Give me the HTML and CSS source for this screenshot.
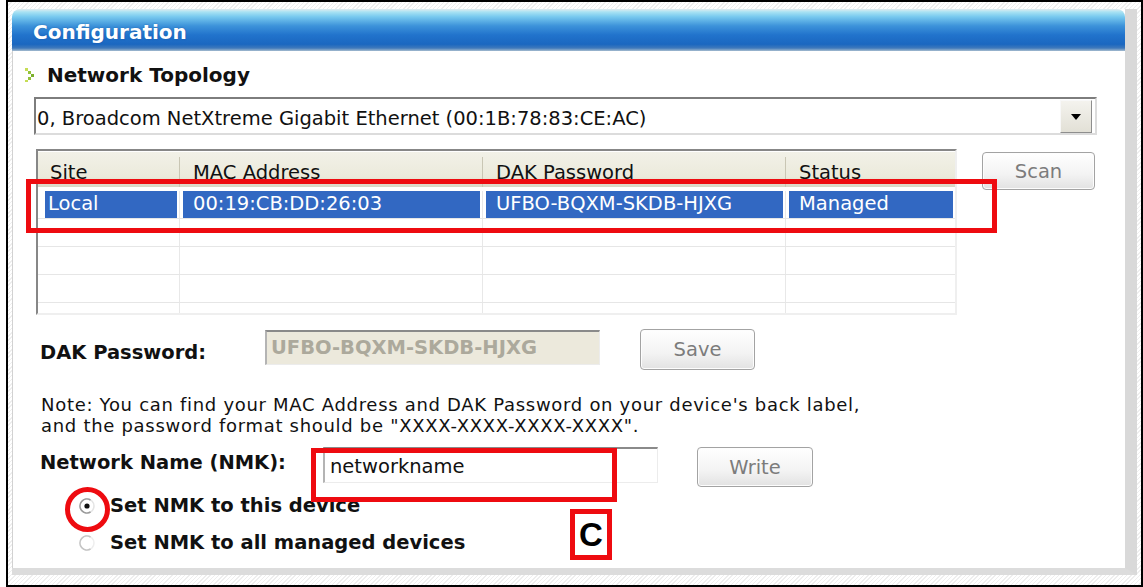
FILE: index.html
```html
<!DOCTYPE html>
<html lang="en">
    <head>
        <meta charset="UTF-8" />
        <title>Configuration</title>
        <link rel="stylesheet" href="styles.css">
    </head>
    <body>
        <div class="shot">
            <div class="panel">
                <div class="panel-head">Configuration</div>
                <div class="panel-body">
                    <div class="section-title">
                        <svg class="bullet" width="10" height="14" viewBox="0 0 10 14">
                            <rect x="0" y="0" width="3" height="3" fill="#c6dd55" />
                            <rect x="3" y="3" width="3" height="3" fill="#93c23a" />
                            <rect x="6" y="6" width="3" height="3" fill="#7cb02c" />
                            <rect x="3" y="9" width="3" height="3" fill="#93c23a" />
                            <rect x="0" y="12" width="3" height="2" fill="#c6dd55" />
                        </svg>
                        Network Topology
                    </div>

                    <div class="combo">
                        <span class="combo-text">0, Broadcom NetXtreme Gigabit Ethernet (00:1B:78:83:CE:AC)</span>
                        <span class="combo-btn"><i class="caret"></i></span>
                    </div>

                    <div class="list-row">
                        <div class="list">
                            <div class="list-head">
                                <span class="col c1">Site</span>
                                <span class="col c2">MAC Address</span>
                                <span class="col c3">DAK Password</span>
                                <span class="col c4">Status</span>
                            </div>
                            <div class="list-body">
                                <div class="item selected">
                                    <span class="col c1"><b>Local</b></span>
                                    <span class="col c2"><b>00:19:CB:DD:26:03</b></span>
                                    <span class="col c3"><b>UFBO-BQXM-SKDB-HJXG</b></span>
                                    <span class="col c4"><b>Managed</b></span>
                                </div>
                                <div class="item">
                                    <span class="col c1"></span><span class="col c2"></span><span class="col c3"></span><span class="col c4"></span>
                                </div>
                                <div class="item">
                                    <span class="col c1"></span><span class="col c2"></span><span class="col c3"></span><span class="col c4"></span>
                                </div>
                                <div class="item">
                                    <span class="col c1"></span><span class="col c2"></span><span class="col c3"></span><span class="col c4"></span>
                                </div>
                                <div class="item">
                                    <span class="col c1"></span><span class="col c2"></span><span class="col c3"></span><span class="col c4"></span>
                                </div>
                            </div>
                        </div>
                        <button class="btn scan">Scan</button>
                    </div>

                    <div class="field dak">
                        <label class="field-label">DAK Password:</label>
                        <div class="input disabled">UFBO-BQXM-SKDB-HJXG</div>
                        <button class="btn save">Save</button>
                    </div>

                    <p class="note">Note: You can find your MAC Address and DAK Password on your device's back label,<br>and the password format should be "XXXX-XXXX-XXXX-XXXX".</p>

                    <div class="field nmk">
                        <label class="field-label">Network Name (NMK):</label>
                        <div class="input">networkname</div>
                        <button class="btn write">Write</button>
                    </div>

                    <div class="radio first">
                        <svg width="18" height="18" viewBox="0 0 18 18">
                            <circle cx="9" cy="9" r="7" fill="#fff" stroke="#e4e4e4" stroke-width="1.5" />
                            <path d="M12.5 2.94 A7 7 0 1 0 12.5 15.06" fill="none" stroke="#9a9a9a" stroke-width="1.6" />
                            <circle cx="9" cy="9" r="2.6" fill="#111" />
                        </svg>
                        Set NMK to this device
                    </div>
                    <div class="radio">
                        <svg width="18" height="18" viewBox="0 0 18 18">
                            <circle cx="9" cy="9" r="7" fill="#fff" stroke="#eeeeee" stroke-width="1.5" />
                            <path d="M12.5 2.94 A7 7 0 1 0 12.5 15.06" fill="none" stroke="#c4c4c4" stroke-width="1.6" />
                        </svg>
                        Set NMK to all managed devices
                    </div>
                </div>
            </div>

            <!-- callouts drawn over the screenshot -->
            <div class="mark mark-row"></div>
            <div class="mark mark-input"></div>
            <div class="mark mark-radio"></div>
            <div class="mark mark-label">C</div>
        </div>
    </body>
</html>
```

FILE: styles.css
```css
* {
    margin: 0px;
    padding: 0px;
    box-sizing: border-box;
}
body {
    background: #fff;
    font-family: "DejaVu Sans", "Noto Sans", sans-serif;
    font-size: 19.5px;
    color: #111;
}

/* outer frame */
.shot {
    position: relative;
    width: 1137px;
    height: 587px;
    margin-left: 6px;
    border: 2px solid #000;
    padding: 7px 4px 10px 4px;
    background: repeating-linear-gradient(135deg, #fff 0 2px, #eeeeee 2px 3px);
}

.panel {
    height: 100%;
    display: flex;
    flex-direction: column;
    border-right: 12px solid #d9d9d9;
    border-bottom: 7px solid #dcdcdc;
    background: #fff;
}
.panel-head {
    height: 42px;
    padding: 3px 0 0 21px;
    line-height: 40px;
    font-weight: bold;
    font-size: 20px;
    color: #fff;
    border-radius: 8px 8px 0 0;
    text-shadow: 0 0 2px rgba(10, 70, 150, 0.6);
    background: linear-gradient(to bottom, #e2ecef 0%, #a8e2f3 7%, #79caef 18%, #3d93da 40%, #2173cc 62%, #1b67c0 84%, #3f79bb 93%, #a6bccf 100%);
}
.panel-body {
    flex: 1;
    border-left: 1px solid #d2d2d2;
}

.section-title {
    display: flex;
    align-items: center;
    height: 24px;
    line-height: 24px;
    margin: 12px 0 0 12px;
    font-weight: bold;
    font-size: 20px;
}
.section-title .bullet {
    margin-right: 12px;
}

/* drop down */
.combo {
    display: flex;
    height: 38px;
    margin: 10px 28px 0 21px;
    border: 2px solid #dcdcdc;
    border-top-color: #7d7d7d;
    border-left-color: #7d7d7d;
    background: #fff;
}
.combo-text {
    flex: 1;
    padding: 6px 0 0 1px;
    line-height: 28px;
    white-space: nowrap;
}
.combo-btn {
    width: 32px;
    height: 33px;
    margin: 1px 3px 0 0;
    display: flex;
    align-items: center;
    justify-content: center;
    background: linear-gradient(#f4f3ee, #e2e0d6);
    border: 1px solid #f8f8f8;
    border-right-color: #8e8e8e;
    border-bottom-color: #8e8e8e;
}
.caret {
    width: 0;
    height: 0;
    border-left: 5px solid transparent;
    border-right: 5px solid transparent;
    border-top: 6px solid #000;
}

/* list view */
.list-row {
    display: flex;
    align-items: flex-start;
    margin: 14px 0 0 23px;
}
.list {
    width: 921px;
    height: 166px;
    overflow: hidden;
    border: 2px solid #efefef;
    border-top-color: #878787;
    border-left-color: #878787;
    background: #fff;
}
.list-head {
    display: flex;
    height: 36px;
    padding-top: 5px;
    line-height: 31px;
    background: linear-gradient(#f2f1e8, #ebeadb 70%, #d8d6c5);
    border-top: 1px solid #fff;
}
.col {
    display: block;
    flex: none;
    white-space: nowrap;
    padding-left: 13px;
    border-right: 1px solid #e8e8e8;
}
.list-head .col {
    border-right: 1px solid #c9c6b4;
}
.col.c1 {
    width: 142px;
    padding-left: 12px;
}
.col.c2 {
    width: 303px;
}
.col.c3 {
    width: 303px;
}
.col.c4 {
    width: 169px;
    border-right: none;
}
.list-head .col.c4 {
    border-right: none;
}
.list-body {
    padding-top: 4px;
}
.item {
    display: flex;
    height: 28px;
    border-bottom: 1px solid #e6e6e6;
}
.item .col {
    padding-left: 0;
    height: 27px;
}
.item.selected .col b {
    display: block;
    height: 27px;
    margin: 0 2px 0 3px;
    padding: 1px 0 0 10px;
    line-height: 24px;
    font-weight: normal;
    color: #fff;
    background: #3268c2;
}
.item.selected .c1 b {
    margin-left: 7px;
    padding-left: 3px;
}

/* buttons */
.btn {
    font-family: "DejaVu Sans", "Noto Sans", sans-serif;
    font-size: 19.5px;
    color: #7c7c7c;
    border: 1px solid #a3a3a3;
    border-radius: 4px;
    background: linear-gradient(#ffffff, #f3f3f3 60%, #e2e2e2);
    box-shadow: inset 0 0 0 1px #fdfdfd;
}
.scan {
    width: 113px;
    height: 38px;
    margin: 3px 0 0 25px;
}

/* form rows */
.field {
    display: flex;
    align-items: flex-start;
    margin-left: 27px;
}
.field-label {
    flex: none;
    font-weight: bold;
    line-height: 24px;
}
.input {
    flex: none;
    width: 335px;
    white-space: nowrap;
    background: #fff;
    border: 1px solid #ececec;
    border-top: 2px solid #8a8a8a;
    border-left: 2px solid #b4b4b4;
}
.dak {
    margin-top: 14px;
}
.dak .field-label {
    width: 225px;
    margin-top: 12px;
}
.dak .input {
    height: 35px;
    margin-top: 1px;
    padding-left: 4px;
    line-height: 31px;
    font-weight: bold;
    color: #aca99c;
    background: #ece9dc;
}
.save {
    width: 115px;
    height: 41px;
    margin-left: 40px;
}

.note {
    margin: 24px 0 0 28px;
    font-size: 18px;
    line-height: 21px;
    letter-spacing: 0.7px;
    white-space: nowrap;
}

.nmk {
    margin-top: 11px;
}
.nmk .field-label {
    width: 283px;
    margin-top: 4px;
}
.nmk .input {
    height: 36px;
    padding: 2px 0 0 5px;
    line-height: 32px;
}
.write {
    width: 116px;
    height: 40px;
    margin-left: 39px;
}

.radio {
    display: flex;
    align-items: center;
    gap: 14px;
    height: 24px;
    line-height: 24px;
    margin: 13px 0 0 65px;
    font-weight: bold;
}
.radio.first {
    margin-top: 7px;
}

/* red callouts */
.mark {
    position: absolute;
    border: 5px solid #ee0b10;
}
.mark-row {
    left: 18px;
    top: 177px;
    width: 971px;
    height: 54px;
}
.mark-input {
    left: 303px;
    top: 446px;
    width: 306px;
    height: 54px;
}
.mark-radio {
    left: 57px;
    top: 485px;
    width: 45px;
    height: 45px;
    border-radius: 50%;
}
.mark-label {
    left: 562px;
    top: 507px;
    width: 42px;
    height: 51px;
    background: #fff;
    font-family: "Liberation Sans", Arial, sans-serif;
    font-weight: bold;
    font-size: 33px;
    line-height: 41px;
    text-align: center;
    color: #000;
}
```
